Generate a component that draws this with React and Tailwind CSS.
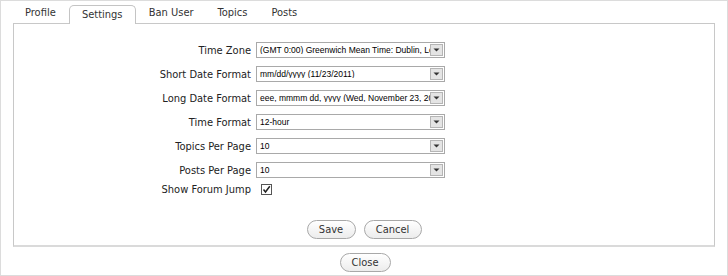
const ROWS = [
  { label: 'Time Zone', value: '(GMT 0:00) Greenwich Mean Time: Dublin, Lo' },
  { label: 'Short Date Format', value: 'mm/dd/yyyy (11/23/2011)' },
  { label: 'Long Date Format', value: 'eee, mmmm dd, yyyy (Wed, November 23, 2011)' },
  { label: 'Time Format', value: '12-hour' },
  { label: 'Topics Per Page', value: '10' },
  { label: 'Posts Per Page', value: '10' },
];

const TABS = ['Profile', 'Settings', 'Ban User', 'Topics', 'Posts'];

const labelFont = "font-['DejaVu_Sans_Condensed','DejaVu_Sans',sans-serif]";

function FakeSelect({ value }) {
  return (
    <div className="flex h-[16px] w-[189px] items-center border border-[#a9a9a9] bg-white">
      <span className="flex-1 overflow-hidden whitespace-nowrap pl-[3px] font-['Liberation_Sans',Arial,sans-serif] text-[8.5px] leading-none text-black">
        {value}
      </span>
      <span className="mr-[1px] flex h-[12px] w-[13px] items-center justify-center border border-[#b5b5b5] bg-[#e4e4e4]">
        <svg width="7" height="4" viewBox="0 0 7 4">
          <path d="M0.5 0.5h6L3.5 3.5z" fill="#333" />
        </svg>
      </span>
    </div>
  );
}

function PillButton({ children, className = '' }) {
  return (
    <button
      type="button"
      className={`h-[19px] rounded-full border border-[#a8a8a8] bg-gradient-to-b from-white to-[#ececec] ${labelFont} text-[11px] leading-none text-[#333] ${className}`}
    >
      {children}
    </button>
  );
}

export default function App() {
  return (
    <div className="h-[276px] w-[728px] bg-white p-0">
      <div className="flex h-[276px] flex-col border border-[#dcdcdc] px-[12px]">
        <div className={`flex h-[22px] items-end pt-[3px] ${labelFont} text-[11px] text-[#333]`}>
          {TABS.map((tab) =>
            tab === 'Settings' ? (
              <div
                key={tab}
                className="relative z-10 -mb-px ml-[1px] mr-[1px] flex h-[19px] w-[67px] items-center justify-center rounded-t-[5px] border border-b-0 border-[#c4c4c4] bg-white"
              >
                {tab}
              </div>
            ) : (
              <div key={tab} className="flex h-[19px] items-center px-[12px]">
                {tab}
              </div>
            )
          )}
        </div>
        <div className="flex h-[224px] flex-col border border-[#c8c8c8] border-b-2 border-b-[#dadada] bg-white">
          <div className="flex flex-col gap-[8px] pt-[18px]">
            {ROWS.map((row) => (
              <div key={row.label} className="flex items-center">
                <div className={`w-[242px] pr-[5px] text-right ${labelFont} text-[11px] leading-none text-[#222]`}>
                  {row.label}
                </div>
                <FakeSelect value={row.value} />
              </div>
            ))}
            <div className="-mt-[2px] flex items-center">
              <div className={`w-[242px] pr-[5px] text-right ${labelFont} text-[11px] leading-none text-[#222]`}>
                Show Forum Jump
              </div>
              <span className="ml-[5px] flex h-[11px] w-[11px] items-center justify-center border border-[#555] bg-white">
                <svg width="9" height="9" viewBox="0 0 9 9">
                  <path d="M1.5 4.5 L3.5 7 L7.8 1.2" fill="none" stroke="#222" strokeWidth="1.5" />
                </svg>
              </span>
            </div>
          </div>
          <div className="mt-[25px] flex justify-center gap-[8px]">
            <PillButton className="w-[49px]">Save</PillButton>
            <PillButton className="w-[58px]">Cancel</PillButton>
          </div>
        </div>
        <div className="mt-[6px] flex justify-center">
          <PillButton className="w-[51px] ml-[2px]">Close</PillButton>
        </div>
      </div>
    </div>
  );
}
